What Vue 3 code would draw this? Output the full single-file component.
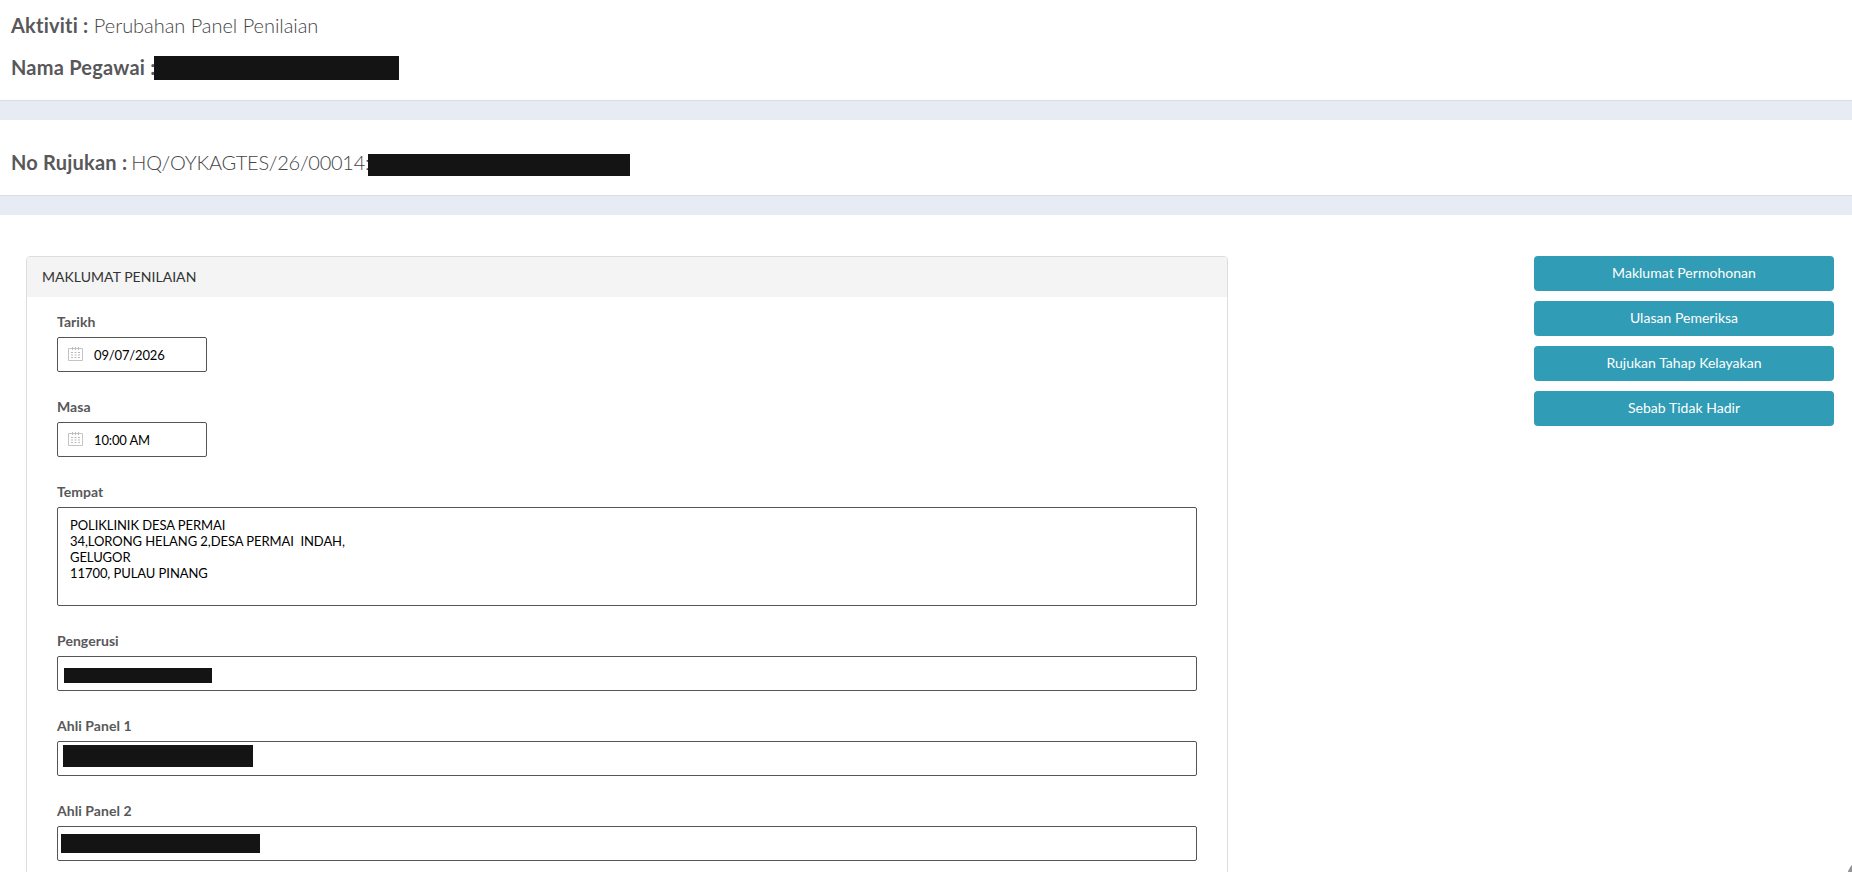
<template>
  <div class="page">
    <header class="info-block info-main">
      <p class="info-line">
        <strong>Aktiviti :</strong> Perubahan Panel Penilaian
      </p>
      <p class="info-line">
        <strong>Nama Pegawai :</strong><span class="redacted redacted-officer"></span>
      </p>
    </header>
    <div class="divider"></div>

    <section class="info-block info-ref">
      <p class="info-line">
        <strong>No Rujukan :</strong><span class="ref-no">HQ/OYKAGTES/26/00014:</span><span class="redacted redacted-applicant"></span>
      </p>
    </section>
    <div class="divider"></div>

    <main class="content">
      <div class="panel">
        <div class="panel-heading">MAKLUMAT PENILAIAN</div>
        <div class="panel-body">
          <div v-for="f in pickers" :key="f.label" class="field">
            <label>{{ f.label }}</label>
            <div class="control picker">
              <svg class="calendar" width="15" height="15" viewBox="0 0 15 15">
                <path d="M.5 2.5h14v12H.5z" fill="none" stroke="#c4c4c4" />
                <path d="M4.5 1v3M7.5 1v3M10.5 1v3" stroke="#bdbdbd" />
                <path
                  d="M3 6.5h2M6.5 6.5h2M10 6.5h2M3 9h2M6.5 9h2M10 9h2M3 11.5h2M6.5 11.5h2M10 11.5h2"
                  stroke="#bbb"
                />
              </svg>
              <span>{{ f.value }}</span>
            </div>
          </div>

          <div class="field">
            <label>Tempat</label>
            <div class="control address">{{ address }}</div>
          </div>

          <div v-for="m in members" :key="m.label" class="field">
            <label>{{ m.label }}</label>
            <div class="control member">
              <span class="redacted" :class="m.mask"></span>
            </div>
          </div>
        </div>
      </div>

      <nav class="actions">
        <button v-for="a in actions" :key="a" type="button">{{ a }}</button>
      </nav>
    </main>

    <div class="scroll-top"></div>
  </div>
</template>

<script setup>
const pickers = [
  { label: 'Tarikh', value: '09/07/2026' },
  { label: 'Masa', value: '10:00 AM' },
]

const address = [
  'POLIKLINIK DESA PERMAI',
  '34,LORONG HELANG 2,DESA PERMAI  INDAH,',
  'GELUGOR',
  '11700, PULAU PINANG',
].join('\n')

// names are masked, only the bar is shown
const members = [
  { label: 'Pengerusi', mask: 'mask-chair' },
  { label: 'Ahli Panel 1', mask: 'mask-first' },
  { label: 'Ahli Panel 2', mask: 'mask-second' },
]

const actions = [
  'Maklumat Permohonan',
  'Ulasan Pemeriksa',
  'Rujukan Tahap Kelayakan',
  'Sebab Tidak Hadir',
]
</script>

<style>
body {
  margin: 0;
  overflow: hidden;
}
</style>

<style scoped>
.page {
  position: relative;
  height: 872px;
  overflow: hidden;
  background: #fff;
  color: #58585a;
  font-family: Lato, "Liberation Sans", sans-serif;
  font-size: 14px;
}

.info-block {
  box-sizing: border-box;
  padding-left: 11px;
}

.info-main {
  height: 100px;
  padding-top: 10px;
}

.info-ref {
  height: 75px;
  padding-top: 27px;
}

.divider {
  box-sizing: border-box;
  height: 20px;
  border-top: 1px solid #dadde8;
  background: #e7ebf4;
}

.info-line {
  display: flex;
  align-items: center;
  height: 30px;
  margin: 0 0 12px;
  color: #454547;
  font-size: 20px;
  font-weight: 300;
  letter-spacing: -0.04px;
  white-space: pre;
}

.info-line strong {
  color: #58585a;
  font-weight: 700;
  letter-spacing: 0.22px;
}

.ref-no {
  margin-left: 4px;
  letter-spacing: -0.27px;
}

.redacted {
  display: block;
  flex-shrink: 0;
  background: #141414;
}

.redacted-officer {
  width: 245px;
  height: 24px;
  margin: 2px 0 0 -2px;
}

.redacted-applicant {
  width: 262px;
  height: 22px;
  margin: 5px 0 0 -2px;
}

.content {
  display: flex;
  justify-content: space-between;
  align-items: flex-start;
  padding: 41px 18px 0 26px;
}

.panel {
  box-sizing: border-box;
  width: 1202px;
  height: 700px;
  border: 1px solid #ddd;
  border-radius: 4px;
}

.panel-heading {
  height: 40px;
  padding-left: 15px;
  border-radius: 3px 3px 0 0;
  background: #f4f4f4;
  color: #333;
  letter-spacing: 0.04px;
  line-height: 40px;
}

.panel-body {
  padding: 15px 30px 0;
}

.field {
  margin-bottom: 25px;
}

label {
  display: block;
  height: 25px;
  font-weight: 700;
  letter-spacing: 0.05px;
  line-height: 20px;
}

.control {
  box-sizing: border-box;
  height: 35px;
  border: 1px solid #555;
  border-radius: 2px;
  color: #000;
  font-size: 13px;
}

.picker {
  display: flex;
  align-items: center;
  width: 150px;
  padding-left: 10px;
  letter-spacing: -0.15px;
}

.calendar {
  margin: -2px 11px 0 0;
}

.address {
  height: 99px;
  padding: 9px 12px;
  letter-spacing: -0.07px;
  line-height: 16px;
  white-space: pre-wrap;
}

.member {
  display: flex;
  align-items: flex-start;
}

.mask-chair {
  width: 148px;
  height: 15px;
  margin: 11px 0 0 6px;
}

.mask-first {
  width: 190px;
  height: 22px;
  margin: 3px 0 0 5px;
}

.mask-second {
  width: 199px;
  height: 19px;
  margin: 7px 0 0 3px;
}

.actions {
  display: flex;
  flex-direction: column;
  gap: 10px;
  width: 300px;
}

.actions button {
  height: 35px;
  padding: 0 0 2px;
  border: 0;
  border-radius: 4px;
  background: #309cb5;
  color: #fff;
  font-family: inherit;
  font-size: 14px;
  letter-spacing: 0.03px;
}

/* floating button, mostly off the corner */
.scroll-top {
  position: absolute;
  right: -35px;
  bottom: -26px;
  width: 40px;
  height: 40px;
  border-radius: 50%;
  background: #929297;
}
</style>
